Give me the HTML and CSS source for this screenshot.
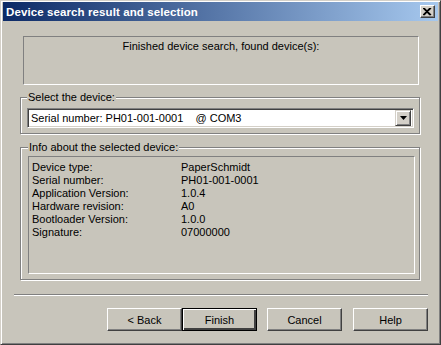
FILE: index.html
```html
<!DOCTYPE html>
<html lang="en">
<head>
  <meta charset="UTF-8" />
  <title>Device search result and selection</title>
  <link rel="stylesheet" href="styles.css">
</head>
<body>
  <div class="window">
    <div class="titlebar">
      <span class="title">Device search result and selection</span>
      <button class="close" aria-label="Close">
        <svg width="9" height="8" viewBox="0 0 9 8">
          <path d="M1 0 L8 7 M0 0 L7 7 M7 0 L0 7 M8 0 L1 7" stroke="#000" stroke-width="1.2" fill="none"/>
        </svg>
      </button>
    </div>

    <div class="client">
      <div class="summary">Finished device search, found device(s):</div>

      <fieldset class="group group-select">
        <legend>Select the device:</legend>
        <div class="combo">
          <span class="combo-text">Serial number: PH01-001-0001    @ COM3</span>
          <span class="combo-btn">
            <svg width="7" height="4" viewBox="0 0 7 4"><path d="M0 0 H7 L3.5 4 Z" fill="#000"/></svg>
          </span>
        </div>
      </fieldset>

      <fieldset class="group group-info">
        <legend>Info about the selected device:</legend>
        <div class="info-panel">
          <div class="info-row"><span>Device type:</span><span>PaperSchmidt</span></div>
          <div class="info-row"><span>Serial number:</span><span>PH01-001-0001</span></div>
          <div class="info-row"><span>Application Version:</span><span>1.0.4</span></div>
          <div class="info-row"><span>Hardware revision:</span><span>A0</span></div>
          <div class="info-row"><span>Bootloader Version:</span><span>1.0.0</span></div>
          <div class="info-row"><span>Signature:</span><span>07000000</span></div>
        </div>
      </fieldset>

      <div class="separator"></div>

      <div class="buttons">
        <button class="btn btn-back">&lt; Back</button>
        <button class="btn btn-default">Finish</button>
        <button class="btn btn-cancel">Cancel</button>
        <button class="btn btn-help">Help</button>
      </div>
    </div>
  </div>
</body>
</html>
```

FILE: styles.css
```css
body {
  margin: 0;
  font-family: 'Liberation Sans', Arial, sans-serif;
  font-size: 11px;
  color: #000;
  background: #c8c5bb;
}

.window {
  width: 441px;
  height: 345px;
  box-sizing: border-box;
  background: #c8c5bb;
  border: 1px solid;
  border-color: #d4d0c8 #404040 #404040 #d4d0c8;
  box-shadow: inset 1px 1px 0 #fff, inset -1px -1px 0 #808080;
  padding: 1px 2px 2px 2px;
  overflow: hidden;
}

.titlebar {
  height: 19px;
  display: flex;
  align-items: center;
  justify-content: space-between;
  background: linear-gradient(to right, #0c2a66, #a6c8ee);
  padding: 0 3px;
}

.title {
  color: #fff;
  font-weight: bold;
  font-size: 11.5px;
  letter-spacing: 0.1px;
}

.close {
  width: 15px;
  height: 13px;
  padding: 0;
  margin: 0;
  display: flex;
  align-items: center;
  justify-content: center;
  background: #d4d0c8;
  border: 1px solid;
  border-color: #fff #404040 #404040 #fff;
  box-shadow: inset -1px -1px 0 #808080;
}

.client {
  display: flex;
  flex-direction: column;
}

.summary {
  margin: 15px 0 0 20px;
  width: 396px;
  height: 49px;
  box-sizing: border-box;
  border: 1px solid;
  border-color: #808080 #fff #fff #808080;
  text-align: center;
  padding-top: 3px;
  line-height: 13px;
}

.group {
  margin: 0 0 0 17px;
  width: 400px;
  box-sizing: border-box;
  border: 1px solid #808080;
  box-shadow: 1px 1px 0 #fff, inset 1px 1px 0 #fff;
  min-inline-size: 0;
}

.group legend {
  padding: 0 1px;
  line-height: 13px;
  background: #c8c5bb;
}

.group-select {
  margin-top: 6px;
  padding: 4px 5px 5px 6px;
}

.group-info {
  margin-top: 7px;
  padding: 2px 4px 5px 7px;
}

.combo {
  height: 20px;
  width: 387px;
  box-sizing: border-box;
  background: #fff;
  border: 1px solid;
  border-color: #808080 #fff #fff #808080;
  box-shadow: inset 1px 1px 0 #404040, inset -1px -1px 0 #d4d0c8;
  display: flex;
  align-items: center;
  justify-content: space-between;
  padding: 2px 2px 2px 3px;
}

.combo-text {
  white-space: pre;
}

.combo-btn {
  width: 16px;
  height: 16px;
  box-sizing: border-box;
  background: #d4d0c8;
  border: 1px solid;
  border-color: #d4d0c8 #404040 #404040 #d4d0c8;
  box-shadow: inset 1px 1px 0 #fff, inset -1px -1px 0 #808080;
  display: flex;
  align-items: center;
  justify-content: center;
}

.info-panel {
  height: 118px;
  box-sizing: border-box;
  border: 1px solid;
  border-color: #808080 #fff #fff #808080;
  padding: 4px 3px 1px;
}

.info-row {
  display: grid;
  grid-template-columns: 149px 1fr;
  line-height: 13px;
}

.separator {
  margin: 14px 0 0 11px;
  width: 414px;
  border-top: 1px solid #808080;
  border-bottom: 1px solid #fff;
}

.buttons {
  display: flex;
  margin: 12px 0 0 104px;
}

.btn {
  width: 75px;
  height: 23px;
  margin: 0;
  padding: 0;
  font-family: 'Liberation Sans', Arial, sans-serif;
  font-size: 11px;
  color: #000;
  background: #c8c5bb;
  border: 1px solid;
  border-color: #fff #404040 #404040 #fff;
  box-shadow: inset -1px -1px 0 #808080;
}

.btn-default {
  border: 1px solid #000;
  box-shadow: inset 1px 1px 0 #fff, inset -2px -2px 0 #404040, inset -2px -2px 0 #808080;
}

.btn-cancel {
  margin-left: 10px;
}

.btn-help {
  margin-left: 11px;
}
```
